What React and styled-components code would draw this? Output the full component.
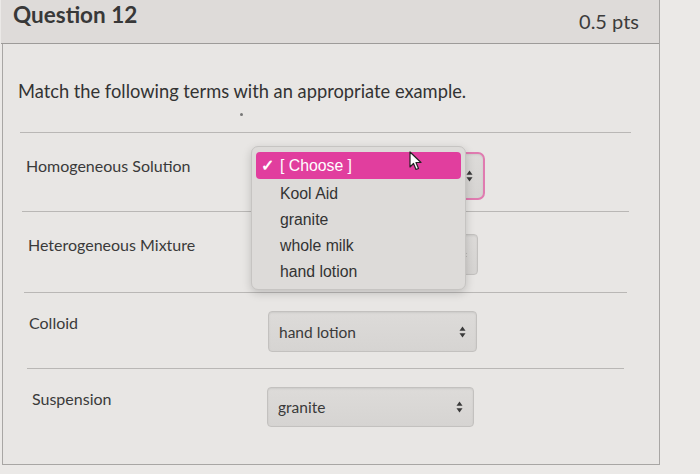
import React from "react";
import styled, { createGlobalStyle } from "styled-components";

const Global = createGlobalStyle`
  html, body { margin: 0; padding: 0; }
  body {
    background: #ebe9e7;
    font-family: Lato, "Open Sans", sans-serif;
    width: 700px; height: 474px; overflow: hidden;
  }
`;

const Panel = styled.div`
  width: 658px;
  height: 465px;
  margin-left: 2px;
  box-sizing: border-box;
  border: 1px solid #a8a6a4;
  border-top: none;
  background: #e8e6e4;
  display: flex;
  flex-direction: column;
`;

const Header = styled.div`
  height: 44px;
  box-sizing: border-box;
  background: #dedbd9;
  border-bottom: 1px solid #9d9b99;
  display: flex;
  align-items: center;
  justify-content: space-between;
  padding: 0 20px 0 12px;
  margin-left: -2px;
`;

const Title = styled.div`
  font-size: 22.5px;
  font-weight: 700;
  color: #383838;
  margin-top: -14px;
`;

const Points = styled.div`
  font-size: 20px;
  color: #3c3c3c;
  margin-top: -2px;
`;

const Body = styled.div`
  position: relative;
  padding: 35px 26px 0 15px;
  display: flex;
  flex-direction: column;
`;

const Prompt = styled.p`
  margin: 0 0 29px 0;
  font-size: 18.3px;
  color: #333;
  line-height: 24px;
`;

const Row = styled.div`
  display: grid;
  grid-template-columns: ${(p) => p.$labelW}px 1fr;
  border-top: 1px solid #b9b7b5;
  height: ${(p) => p.$h}px;
  box-sizing: border-box;
  margin-left: ${(p) => p.$indent}px;
  margin-right: ${(p) => p.$indent}px;
`;

const Label = styled.div`
  padding: ${(p) => p.$top}px 0 0 ${(p) => p.$pad}px;
  font-size: 16px;
  color: #3a3a3a;
  line-height: 20px;
`;

const SelectCell = styled.div`
  position: relative;
  padding-top: ${(p) => p.$top}px;
`;

const Select = styled.div`
  width: ${(p) => p.$w}px;
  height: ${(p) => p.$h}px;
  box-sizing: border-box;
  border: ${(p) => (p.$focus ? "2px solid #e07bb0" : "1px solid #c3c1bf")};
  border-radius: ${(p) => (p.$focus ? 7 : 4)}px;
  background: linear-gradient(#dddbd9, #d6d4d2);
  box-shadow: inset 0 1px 2px rgba(0,0,0,0.08);
  display: flex;
  align-items: center;
  justify-content: space-between;
  padding: 0 10px 0 10px;
  font-size: 15.5px;
  color: #3a3a3a;
`;

const Arrows = styled.svg`
  width: 7px;
  height: 12px;
  flex: none;
`;

const Menu = styled.div`
  position: absolute;
  left: -17px;
  top: 13px;
  width: 215px;
  height: 144px;
  box-sizing: border-box;
  background: #dddbd9;
  border: 1px solid #c6c4c2;
  border-radius: 7px;
  box-shadow: 0 3px 10px rgba(0,0,0,0.18);
  padding: 5px 4px;
  font-family: "Liberation Sans", Arial, sans-serif;
  display: flex;
  flex-direction: column;
  z-index: 2;
`;

const Item = styled.div`
  height: ${(p) => (p.$active ? 27 : 26)}px;
  flex: none;
  display: flex;
  align-items: center;
  padding-left: ${(p) => (p.$active ? 5 : 24)}px;
  margin-bottom: ${(p) => (p.$active ? 2 : 0)}px;
  font-size: 15.8px;
  color: ${(p) => (p.$active ? "#fff" : "#333")};
  background: ${(p) => (p.$active ? "#e13e9e" : "transparent")};
  border-radius: 4px;
`;

const Check = styled.span`
  width: 19px;
  font-size: 16px;
  font-weight: 700;
`;

const Cursor = styled.svg`
  position: absolute;
  left: 157px;
  top: 4px;
  width: 14px;
  height: 20px;
`;

const Dot = styled.span`
  position: absolute;
  left: 237px;
  top: 69px;
  width: 3px;
  height: 3px;
  border-radius: 50%;
  background: #777;
`;

const ArrowIcon = () => (
  <Arrows viewBox="0 0 7 12">
    <path d="M3.5 0.5 L6.5 4.8 L0.5 4.8 Z" fill="#3a3a3a" />
    <path d="M3.5 11.5 L6.5 7.2 L0.5 7.2 Z" fill="#3a3a3a" />
  </Arrows>
);

const rows = [
  { label: "Homogeneous Solution", value: "", open: true, h: 79, indent: 2, lw: 248, lt: 23, pad: 6, st: 19, sw: 217, sh: 48 },
  { label: "Heterogeneous Mixture", value: "", h: 81, indent: 4, lw: 246, lt: 23, pad: 6, st: 22, sw: 210, sh: 41 },
  { label: "Colloid", value: "hand lotion", h: 76, indent: 6, lw: 244, lt: 20, pad: 5, st: 18, sw: 209, sh: 41 },
  { label: "Suspension", value: "granite", h: 76, indent: 9, lw: 240, lt: 20, pad: 5, st: 18, sw: 207, sh: 40 },
];

const options = ["Kool Aid", "granite", "whole milk", "hand lotion"];

export default function App() {
  return (
    <>
      <Global />
      <Panel>
        <Header>
          <Title>Question 12</Title>
          <Points>0.5 pts</Points>
        </Header>
        <Body>
          <Prompt>Match the following terms with an appropriate example.</Prompt>
          <Dot />
          {rows.map((r) => (
            <Row key={r.label} $h={r.h} $indent={r.indent} $labelW={r.lw}>
              <Label $top={r.lt} $pad={r.pad}>{r.label}</Label>
              <SelectCell $top={r.st}>
                <Select $w={r.sw} $h={r.sh} $focus={r.open}>
                  <span>{r.value}</span>
                  <ArrowIcon />
                </Select>
                {r.open && (
                  <Menu>
                    <Item $active>
                      <Check>✓</Check>[ Choose ]
                    </Item>
                    {options.map((o) => (
                      <Item key={o}>{o}</Item>
                    ))}
                    <Cursor viewBox="0 0 14 20">
                      <path
                        d="M1 1 L1 16 L4.5 12.5 L7 18.5 L9.5 17.5 L7 11.5 L12 11.5 Z"
                        fill="#fff"
                        stroke="#222"
                        strokeWidth="1.2"
                        strokeLinejoin="round"
                      />
                    </Cursor>
                  </Menu>
                )}
              </SelectCell>
            </Row>
          ))}
        </Body>
      </Panel>
    </>
  );
}
